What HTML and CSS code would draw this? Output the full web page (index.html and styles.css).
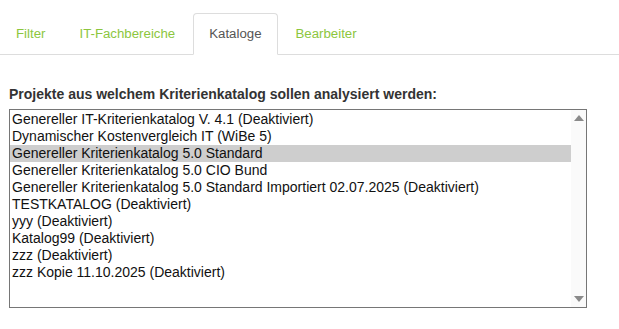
FILE: index.html
```html
<!DOCTYPE html>
<html lang="de">
<head>
    <meta charset="UTF-8">
    <title>Kataloge</title>
    <link rel="stylesheet" href="styles.css">
</head>
<body>

<ul class="nav-tabs">
    <li><a href="#">Filter</a></li>
    <li><a href="#">IT-Fachbereiche</a></li>
    <li class="active"><a href="#">Kataloge</a></li>
    <li><a href="#">Bearbeiter</a></li>
</ul>

<div class="tab-content">
    <label class="field-label">Projekte aus welchem Kriterienkatalog sollen analysiert werden:</label>
    <div class="listbox">
        <ul class="options">
            <li>Genereller IT-Kriterienkatalog V. 4.1 (Deaktiviert)</li>
            <li>Dynamischer Kostenvergleich IT (WiBe 5)</li>
            <li class="selected">Genereller Kriterienkatalog 5.0 Standard</li>
            <li>Genereller Kriterienkatalog 5.0 CIO Bund</li>
            <li>Genereller Kriterienkatalog 5.0 Standard Importiert 02.07.2025 (Deaktiviert)</li>
            <li>TESTKATALOG (Deaktiviert)</li>
            <li>yyy (Deaktiviert)</li>
            <li>Katalog99 (Deaktiviert)</li>
            <li>zzz (Deaktiviert)</li>
            <li>zzz Kopie 11.10.2025 (Deaktiviert)</li>
        </ul>
        <div class="scrollbar">
            <span class="arrow up"></span>
            <span class="arrow down"></span>
        </div>
    </div>
</div>

</body>
</html>
```

FILE: styles.css
```css
body {
    margin: 0;
    background: #fff;
    font-family: "Liberation Sans", Arial, sans-serif;
    font-size: 14px;
    color: #333;
}
.nav-tabs {
    display: flex;
    margin: 0;
    padding: 13px 0 0 0;
    list-style: none;
    border-bottom: 1px solid #ddd;
}
.nav-tabs li {
    margin-right: 2px;
    margin-bottom: -1px;
}
.nav-tabs a {
    display: block;
    padding: 10px 15px;
    line-height: 20px;
    font-size: 13.25px;
    color: #8cc63e;
    text-decoration: none;
    border: 1px solid transparent;
    border-radius: 4px 4px 0 0;
}
.nav-tabs li.active a {
    color: #555;
    background: #fff;
    border-color: #ddd #ddd transparent #ddd;
}
.tab-content {
    padding: 29px 0 0 9px;
}
.field-label {
    display: block;
    font-weight: bold;
    line-height: 20px;
    margin-bottom: 5px;
}
.listbox {
    display: flex;
    width: 576px;
    height: 197px;
    border: 1px solid #767676;
    background: #fff;
}
.options {
    flex: 1;
    margin: 0;
    padding: 1px 0 0 0;
    list-style: none;
    color: #111;
}
.options li {
    height: 17px;
    line-height: 16px;
    padding-left: 2px;
    white-space: nowrap;
}
.options li.selected {
    background: #cecece;
}
.scrollbar {
    position: relative;
    width: 15px;
    background: #fafafa;
}
.arrow {
    position: absolute;
    left: 3px;
    width: 0;
    height: 0;
    border-left: 5px solid transparent;
    border-right: 5px solid transparent;
}
.arrow.up {
    top: 5px;
    border-bottom: 6px solid #8a8a8a;
}
.arrow.down {
    bottom: 5px;
    border-top: 6px solid #8a8a8a;
}
```
